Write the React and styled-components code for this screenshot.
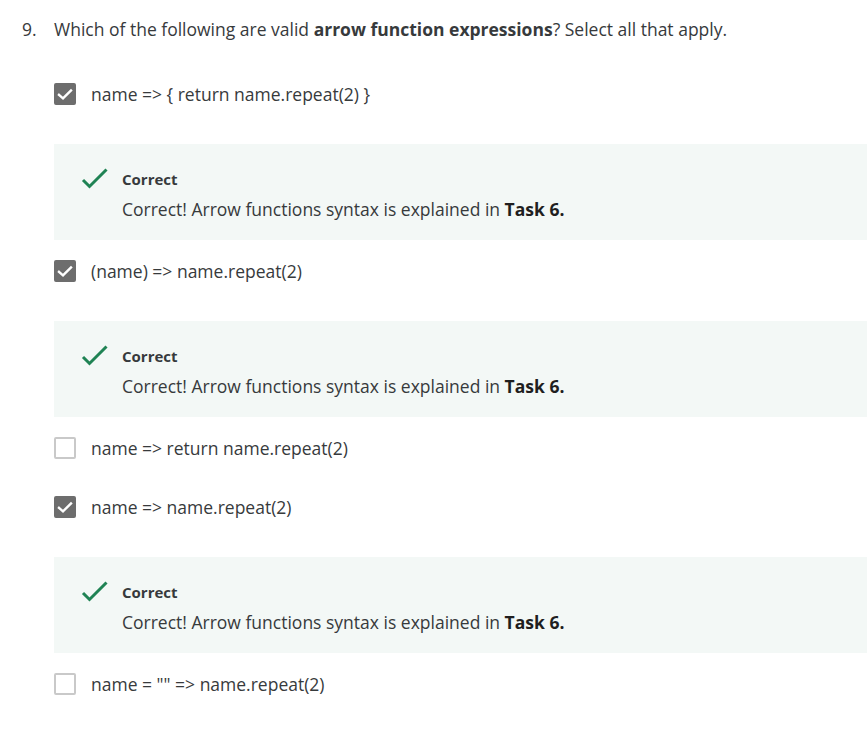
import React from "react";
import styled, { createGlobalStyle } from "styled-components";

const Global = createGlobalStyle`
  html, body { margin: 0; padding: 0; background: #fff; }
  body { font-family: "Open Sans", "Noto Sans", sans-serif; color: #373a3c; }
`;

const Page = styled.div`
  padding: 17px 0 0 22px;
`;

const Question = styled.div`
  display: flex;
  font-size: 17.5px;
  line-height: 24px;
  color: #373a3c;
`;

const Num = styled.span`
  width: 32px;
  flex: none;
`;

const Options = styled.div`
  display: flex;
  flex-direction: column;
  gap: 20px;
  margin: 42px 0 0 32px;
`;

const Item = styled.div`
  display: flex;
  flex-direction: column;
`;

const Row = styled.label`
  display: flex;
  align-items: center;
  gap: 15px;
  height: 22px;
  padding-bottom: 17px;
  font-size: 17.5px;
  color: #373a3c;
`;

const Box = styled.span`
  width: 22px;
  height: 22px;
  box-sizing: border-box;
  border-radius: 2px;
  flex: none;
  display: flex;
  align-items: center;
  justify-content: center;
  background: ${(p) => (p.$checked ? "#6d6d6d" : "#fff")};
  border: 2px solid ${(p) => (p.$checked ? "#6d6d6d" : "#c9c9c9")};
`;

const Feedback = styled.div`
  margin-top: 22px;
  height: 96px;
  box-sizing: border-box;
  background: #f3f8f6;
  display: flex;
  padding: 24px 0 0 27px;
  gap: 13px;
  margin-right: -40px;
`;

const FeedText = styled.div`
  display: flex;
  flex-direction: column;
`;

const FeedTitle = styled.div`
  font-size: 15px;
  font-weight: 700;
  line-height: 22px;
  color: #373a3c;
`;

const FeedBody = styled.div`
  font-size: 17.5px;
  line-height: 24px;
  margin-top: 7px;
  color: #373a3c;
  b { color: #1f1f1f; }
`;

const Check = () => (
  <svg width="16" height="13" viewBox="0 0 16 13">
    <path d="M2 6.8 L6 10.4 L14 2.4" fill="none" stroke="#fff" strokeWidth="2.4" strokeLinecap="square" />
  </svg>
);

const GreenCheck = () => (
  <svg width="28" height="22" viewBox="0 0 28 22">
    <path d="M2 12 L8.5 18.5 L25.5 1.5" fill="none" stroke="#1f8354" strokeWidth="3" />
  </svg>
);

const options = [
  { text: "name => { return name.repeat(2) }", checked: true },
  { text: "(name) => name.repeat(2)", checked: true },
  { text: "name => return name.repeat(2)", checked: false },
  { text: "name => name.repeat(2)", checked: true },
  { text: 'name = "" => name.repeat(2)', checked: false },
];

export default function App() {
  return (
    <Page>
      <Global />
      <Question>
        <Num>9.</Num>
        <span>
          Which of the following are valid <b>arrow function expressions</b>? Select all that apply.
        </span>
      </Question>
      <Options>
        {options.map((o, i) => (
          <Item key={i}>
            <Row>
              <Box $checked={o.checked}>{o.checked && <Check />}</Box>
              <span>{o.text}</span>
            </Row>
            {o.checked && (
              <Feedback>
                <GreenCheck />
                <FeedText>
                  <FeedTitle>Correct</FeedTitle>
                  <FeedBody>
                    Correct! Arrow functions syntax is explained in <b>Task 6.</b>
                  </FeedBody>
                </FeedText>
              </Feedback>
            )}
          </Item>
        ))}
      </Options>
    </Page>
  );
}
